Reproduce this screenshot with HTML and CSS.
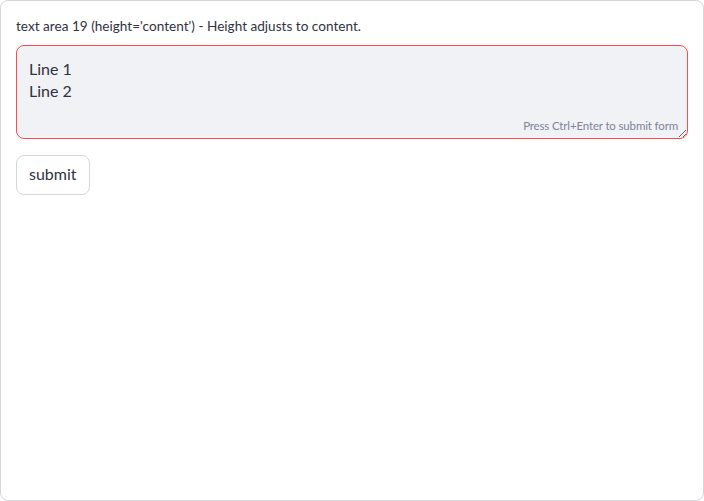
FILE: index.html
```html
<!DOCTYPE html>
<html>
<head>
<meta charset="utf-8">
<link rel="stylesheet" href="styles.css">
</head>
<body>
<form class="form">
  <label class="label" for="ta">text area 19 (height='content') - Height adjusts to content.</label>
  <div class="field">
    <textarea id="ta" class="textarea">Line 1
Line 2</textarea>
    <div class="hint">Press Ctrl+Enter to submit form</div>
  </div>
  <div class="actions">
    <button type="button" class="btn">submit</button>
  </div>
</form>
</body>
</html>
```
FILE: styles.css
```css
html, body {
  margin: 0;
  padding: 0;
  background: #ffffff;
}
body {
  font-family: Lato, "Liberation Sans", sans-serif;
  color: #31333f;
}
.form {
  box-sizing: border-box;
  width: 704px;
  height: 501px;
  border: 1px solid #d6d6d9;
  border-radius: 8px;
  padding: 15px;
  display: flex;
  flex-direction: column;
}
.label {
  display: flex;
  align-items: center;
  box-sizing: border-box;
  height: 24px;
  padding-bottom: 4px;
  margin-bottom: 5px;
  font-size: 13.6px;
}
.field {
  position: relative;
  display: flex;
}
.textarea {
  box-sizing: border-box;
  width: 672px;
  height: 94px;
  margin: 0;
  border: 1px solid #ff4b4b;
  border-radius: 8px;
  background: #f0f2f6;
  color: #31333f;
  font-family: inherit;
  font-size: 16px;
  line-height: 22.4px;
  padding: 12px 12px;
  resize: vertical;
  outline: none;
}
.hint {
  position: absolute;
  right: 10px;
  bottom: 7px;
  font-size: 11.5px;
  letter-spacing: -0.15px;
  color: #808495;
}
.actions {
  margin-top: 16px;
  display: flex;
}
.btn {
  box-sizing: border-box;
  height: 40px;
  padding: 0 12px 3px;
  border: 1px solid #d6d6d9;
  border-radius: 8px;
  background: #ffffff;
  color: #31333f;
  font-family: inherit;
  font-size: 16px;
}
```
